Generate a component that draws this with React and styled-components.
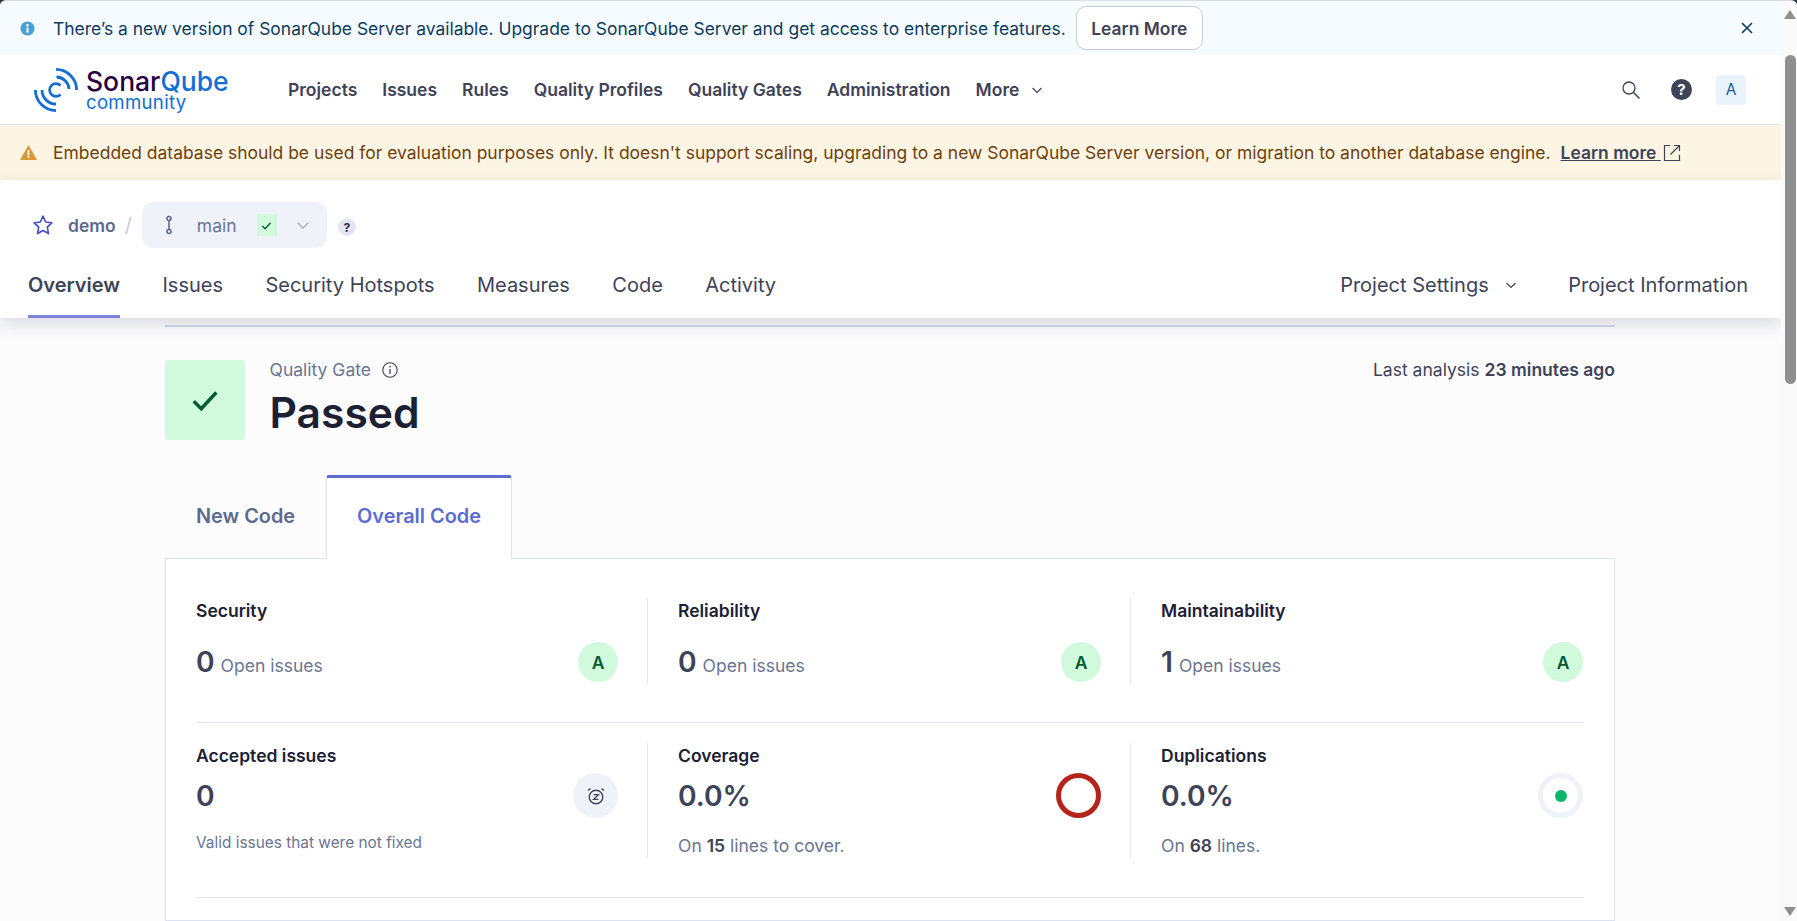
import React from 'react';
import styled, { createGlobalStyle } from 'styled-components';

const Global = createGlobalStyle`
  html, body { margin: 0; padding: 0; height: 921px; overflow: hidden; background: #30343c; }
  body, button { font-family: Inter, "Noto Sans", sans-serif; }
  * { box-sizing: border-box; }
  #root { height: 921px; }
`;

const Shell = styled.div`display: flex; height: 921px; border-top: 1px solid #d9dde8; border-radius: 6px 6px 0 0; overflow: hidden; background: #fcfcfd;`;
const Page = styled.div`flex: 1; min-width: 0; overflow: hidden; display: flex; flex-direction: column;`;

const Scrollbar = styled.div`
  width: 16px; flex: none; background: #fafafa; display: flex; flex-direction: column; align-items: center; padding: 9px 0 5px 2px;
`;
const ArrowUp = styled.div`width: 0; height: 0; flex: none; border-left: 6px solid transparent; border-right: 6px solid transparent; border-bottom: 9px solid #8f8f8f;`;
const ArrowDown = styled.div`width: 0; height: 0; flex: none; border-left: 6px solid transparent; border-right: 6px solid transparent; border-top: 9px solid #8f8f8f; margin-top: auto;`;
const Thumb = styled.div`width: 11px; height: 329px; flex: none; margin-top: 36px; background: #8f8f8f; border-radius: 6px;`;

const InfoBanner = styled.div`
  height: 54px; flex: none; background: #f5fbff; display: flex; align-items: center; padding: 0 28px 0 20px; color: #0e3b5c; font-size: 17.46px;
`;
const BannerText = styled.span`margin-left: 18px; white-space: nowrap;`;
const LearnButton = styled.button`
  margin-left: 10px; height: 44px; width: 127px; flex: none; background: #fff; border: 1px solid #c5cce0; border-radius: 10px;
  font-size: 17.46px; font-weight: 600; color: #3e4357; padding: 0;
`;
const CloseIcon = styled.span`margin-left: auto; display: flex; color: #0e3b5c;`;

const MainNav = styled.nav`
  height: 70px; flex: none; background: #fff; border-bottom: 1px solid #e1e6f3; display: flex; align-items: center; padding: 0 35px 0 34px;
`;
const Logo = styled.div`display: flex; align-items: center; gap: 8px; width: 254px; flex: none;`;
const LogoWords = styled.div`display: flex; flex-direction: column; font-family: Inter, sans-serif; margin-top: 3px;`;
const LogoTop = styled.span`font-size: 26.5px; line-height: 22px; font-weight: 500; color: #290042;`;
const LogoQube = styled.span`color: #126ed3;`;
const LogoBottom = styled.span`font-size: 18.6px; line-height: 20px; color: #126ed3; letter-spacing: 0.3px;`;
const NavLinks = styled.div`display: flex; align-items: center; gap: 25px;`;
const NavLink = styled.a`font-size: 17.5px; font-weight: 600; color: #3e4357; display: flex; align-items: center; gap: 12px;`;
const NavRight = styled.div`margin-left: auto; display: flex; align-items: center; color: #3e4357;`;
const HelpCircle = styled.span`
  width: 21px; height: 21px; border-radius: 50%; background: #3e4357; color: #fff; font-size: 15px; font-weight: 700;
  display: flex; align-items: center; justify-content: center; margin-left: 30px;
`;
const Avatar = styled.span`
  width: 30px; height: 30px; border-radius: 4px; background: #e8f3fb; color: #24598a; font-size: 15.4px;
  display: flex; align-items: center; justify-content: center; margin-left: 24px;
`;

const WarnBanner = styled.div`
  height: 55px; flex: none; background: #fcf5e4; color: #6e3f0b; font-size: 17.48px; display: flex; align-items: center; padding-left: 20px;
`;
const WarnText = styled.span`margin-left: 16px; white-space: nowrap;`;
const WarnLink = styled.a`color: #3e4357; font-weight: 600; text-decoration: underline; margin-left: 10px; display: flex; align-items: center; white-space: pre;`;
const ExtIcon = styled.span`display: flex; margin-left: 2px;`;

const ProjectHeader = styled.header`
  height: 138px; flex: none; background: #fff; box-shadow: 0 6px 16px rgba(30, 35, 60, 0.16); display: flex; flex-direction: column; position: relative; z-index: 1;
`;
const Crumbs = styled.div`display: flex; align-items: center; height: 46px; margin-top: 22px; padding-left: 32px;`;
const ProjectName = styled.span`font-size: 17.5px; font-weight: 600; color: #5d6a8c; margin-left: 14px;`;
const Slash = styled.span`font-size: 19.8px; color: #c5cce0; margin: 0 10px 0 9px;`;
const BranchPill = styled.div`
  width: 185px; height: 46px; border-radius: 12px; background: #eff2f9; display: flex; align-items: center; padding-left: 21px;
  font-size: 17.5px; color: #6a7590;
`;
const BranchName = styled.span`margin-left: 22px;`;
const BranchBadge = styled.span`width: 20px; height: 22px; background: #d1f9dc; display: flex; align-items: center; justify-content: center; margin-left: 20px; color: #055c30;`;
const BranchChevron = styled.span`display: flex; margin-left: 19px; color: #a8b0c8;`;
const QuestionDot = styled.span`
  width: 18px; height: 18px; border-radius: 50%; background: #e1e6f3; color: #2d3147; font-size: 12.1px; font-weight: 700;
  display: flex; align-items: center; justify-content: center; margin: 4px 0 0 11px;
`;
const TabRow = styled.div`display: flex; align-items: stretch; margin-top: auto; padding: 0 33px 0 28px; height: 70px; gap: 42.4px;`;
const NavTab = styled.a`
  font-size: 20px; font-weight: ${p => (p.$active ? 600 : 400)}; color: #3e4357; display: flex; align-items: center; gap: 16px;
  padding: 7px ${p => (p.$push ? 9 : 0)}px 0 0; border-bottom: 3px solid ${p => (p.$active ? '#7a83d9' : 'transparent')};
  margin-left: ${p => (p.$push ? 'auto' : '0')};
`;

const Content = styled.main`flex: 1; padding: 7px 166px 0 165px; width: 100%; display: flex; flex-direction: column; min-height: 0; margin: 0;`;
const Rule = styled.hr`border: 0; height: 2px; background: #d5d9e8; margin: 0; flex: none;`;
const GateRow = styled.section`display: flex; margin-top: 33px; height: 80px; flex: none;`;
const GateSquare = styled.div`width: 80px; height: 80px; border-radius: 4px; background: #d1f9dc; color: #055c30; display: flex; align-items: center; justify-content: center;`;
const GateText = styled.div`margin-left: 24.5px; display: flex; flex-direction: column;`;
const GateLabel = styled.div`font-size: 17.5px; line-height: 20px; color: #6a7590; display: flex; align-items: center; gap: 11px;`;
const GateInfo = styled.span`display: flex; color: #3e4357;`;
const GateValue = styled.div`font-size: 42.6px; font-weight: 600; line-height: 48px; color: #1c2033; margin-top: 9px;`;
const LastAnalysis = styled.div`margin-left: auto; font-size: 17.55px; line-height: 20px; color: #3e4357;`;
const Strong = styled.strong`font-weight: 600; color: #3e4357;`;

const CodeTabs = styled.div`display: flex; margin-top: 35px; height: 84px; flex: none; position: relative; z-index: 1; margin-bottom: -1px;`;
const CodeTab = styled.div`
  width: ${p => p.$w}px; font-size: 19.9px; font-weight: 600; display: flex; align-items: center; justify-content: center; padding-bottom: 2px;
  color: ${p => (p.$active ? '#5d6cd0' : '#5d6a8c')};
  background: ${p => (p.$active ? '#fff' : 'transparent')};
  ${p => p.$active && 'border: 1px solid #dde2f0; border-top: 3px solid #5d6cd0; border-bottom: 0; border-radius: 3px 3px 0 0; padding-bottom: 5px;'}
`;
const Card = styled.div`
  flex: 1; background: #fff; border: 1px solid #dde2f0; padding: 0 30px 0 30px;
`;
const MetricRow = styled.div`
  display: grid; grid-template-columns: 451px 483px 454px; border-bottom: 1px solid #e1e6f3; height: ${p => p.$h}px; padding-top: ${p => p.$top}px;
`;
const Metric = styled.div`
  height: ${p => p.$h}px; display: flex; flex-direction: column; position: relative;
  padding: 0 ${p => (p.$last ? 1 : 29)}px 0 ${p => (p.$first ? 0 : 30)}px;
  border-left: ${p => (p.$first ? '0' : '1px solid #e1e6f3')};
`;
const MetricTitle = styled.div`font-size: 17.5px; font-weight: 600; line-height: 20px; color: #1c2033; margin-top: ${p => p.$mt || 0}px;`;
const MetricLine = styled.div`display: flex; align-items: center; justify-content: space-between; margin-top: ${p => p.$mt}px;`;
const ValueGroup = styled.div`display: flex; align-items: baseline; gap: 6px;`;
const BigValue = styled.span`font-size: 28.2px; font-weight: 600; line-height: 40px; color: #3e4357;`;
const OpenIssues = styled.span`font-size: 17.5px; color: #6a7590;`;
const RatingCircle = styled.span`
  width: 40px; height: 40px; border-radius: 50%; background: #d1f9dc; color: #055c30; font-size: 17.5px; font-weight: 600;
  display: flex; align-items: center; justify-content: center;
`;
const ClockCircle = styled.span`
  width: 45px; height: 45px; border-radius: 50%; background: #eff2f9; color: #3e4357; display: flex; align-items: center; justify-content: center;
`;
const Ring = styled.span`
  width: 45px; height: 45px; border-radius: 50%; border: 5px solid ${p => p.$color}; display: flex; align-items: center; justify-content: center;
`;
const Dot = styled.span`width: 12px; height: 12px; border-radius: 50%; background: #0fb46a;`;
const SmallNote = styled.div`font-size: 15.4px; line-height: 18px; color: #6a7590; margin-top: ${p => p.$mt}px;`;
const Note = styled.div`font-size: 17.5px; line-height: 20px; color: #6a7590; margin-top: ${p => p.$mt}px;`;

const LogoMark = () => (
  <svg width="44" height="44" viewBox="0 0 44 44" fill="none" stroke="#126ed3" strokeWidth="2.8">
    <path d="M22 1.4 A20.6 20.6 0 0 1 42.6 22" />
    <path d="M22.5 9 A13 13 0 0 1 35 21" />
    <path d="M26.5 17.5 A6.4 6.4 0 1 0 26.5 26.5" strokeWidth="2.6" />
    <path d="M1.4 22 A20.6 20.6 0 0 0 22 42.6" />
    <path d="M8 22 A14 14 0 0 0 22 36" />
  </svg>
);

const SearchIcon = () => (
  <svg width="20" height="20" viewBox="0 0 20 20" fill="none" stroke="#3e4357" strokeWidth="1.3">
    <circle cx="8" cy="8" r="6" />
    <path d="M12.5 12.5 L18.5 18.5" strokeWidth="1.5" />
  </svg>
);
const Chevron = ({ size = 12 }) => (
  <svg width={size} height={size} viewBox="0 0 12 12" fill="none" stroke="currentColor" strokeWidth="1.2">
    <path d="M1.5 4 L6 8.5 L10.5 4" />
  </svg>
);
const Check = ({ size = 12, w = 2 }) => (
  <svg width={size} height={size} viewBox="0 0 24 24" fill="none" stroke="currentColor" strokeWidth={w * 2}>
    <path d="M3 13 L9 19 L21 6" />
  </svg>
);

export default function App() {
  return (
    <>
      <Global />
      <Shell>
        <Page>
          <InfoBanner>
            <svg width="15" height="15" viewBox="0 0 16 16"><circle cx="8" cy="8" r="7.5" fill="#4b9fd5" /><rect x="6.9" y="7" width="2.2" height="5.4" fill="#fff" /><circle cx="8" cy="4.6" r="1.3" fill="#fff" /></svg>
            <BannerText>There’s a new version of SonarQube Server available. Upgrade to SonarQube Server and get access to enterprise features.</BannerText>
            <LearnButton>Learn More</LearnButton>
            <CloseIcon>
              <svg width="12" height="12" viewBox="0 0 12 12" fill="none" stroke="currentColor" strokeWidth="1.6"><path d="M1 1 L11 11 M11 1 L1 11" /></svg>
            </CloseIcon>
          </InfoBanner>
          <MainNav>
            <Logo>
              <LogoMark />
              <LogoWords>
                <LogoTop>Sonar<LogoQube>Qube</LogoQube></LogoTop>
                <LogoBottom>community</LogoBottom>
              </LogoWords>
            </Logo>
            <NavLinks>
              <NavLink>Projects</NavLink>
              <NavLink>Issues</NavLink>
              <NavLink>Rules</NavLink>
              <NavLink>Quality Profiles</NavLink>
              <NavLink>Quality Gates</NavLink>
              <NavLink>Administration</NavLink>
              <NavLink>More <Chevron /></NavLink>
            </NavLinks>
            <NavRight>
              <SearchIcon />
              <HelpCircle>?</HelpCircle>
              <Avatar>A</Avatar>
            </NavRight>
          </MainNav>
          <WarnBanner>
            <svg width="17" height="15" viewBox="0 0 17 15"><path d="M8.5 0 L17 15 L0 15 Z" fill="#d99a35" /><rect x="7.7" y="5" width="1.6" height="5.5" fill="#fff" /><rect x="7.7" y="11.4" width="1.6" height="1.7" fill="#fff" /></svg>
            <WarnText>Embedded database should be used for evaluation purposes only. It doesn't support scaling, upgrading to a new SonarQube Server version, or migration to another database engine.</WarnText>
            <WarnLink>Learn more <ExtIcon>
              <svg width="18" height="18" viewBox="0 0 18 18" fill="none" stroke="#3e4357" strokeWidth="1.2"><path d="M7 1.5 H1.5 V16.5 H16.5 V11" /><path d="M11 1.5 H16.5 V7 M16.5 1.5 L7.5 10.5" /></svg>
            </ExtIcon></WarnLink>
          </WarnBanner>
          <ProjectHeader>
            <Crumbs>
              <svg width="22" height="22" viewBox="0 0 20 20" fill="none" stroke="#4350c4" strokeWidth="1.5" strokeLinejoin="round"><path d="M10 2 L12.4 7.3 L18 8 L13.9 12 L15 17.8 L10 15 L5 17.8 L6.1 12 L2 8 L7.6 7.3 Z" /></svg>
              <ProjectName>demo</ProjectName>
              <Slash>/</Slash>
              <BranchPill>
                <svg width="12" height="20" viewBox="0 0 12 20" fill="none" stroke="#5d6a8c" strokeWidth="1.6"><circle cx="6" cy="3.5" r="2" /><circle cx="6" cy="16.5" r="2" /><path d="M6 5.5 V14.5" /></svg>
                <BranchName>main</BranchName>
                <BranchBadge><Check size={11} w={1.5} /></BranchBadge>
                <BranchChevron><Chevron size={14} /></BranchChevron>
              </BranchPill>
              <QuestionDot>?</QuestionDot>
            </Crumbs>
            <TabRow>
              <NavTab $active>Overview</NavTab>
              <NavTab>Issues</NavTab>
              <NavTab>Security Hotspots</NavTab>
              <NavTab>Measures</NavTab>
              <NavTab>Code</NavTab>
              <NavTab>Activity</NavTab>
              <NavTab $push>Project Settings <Chevron /></NavTab>
              <NavTab>Project Information</NavTab>
            </TabRow>
          </ProjectHeader>
          <Content>
            <Rule />
            <GateRow>
              <GateSquare><Check size={30} w={1.4} /></GateSquare>
              <GateText>
                <GateLabel>Quality Gate
                  <GateInfo>
                    <svg width="16" height="16" viewBox="0 0 16 16" fill="none" stroke="currentColor" strokeWidth="1.1"><circle cx="8" cy="8" r="7.2" /><path d="M8 7 V12" strokeWidth="1.3" /><path d="M8 4 V5.4" strokeWidth="1.4" /></svg>
                  </GateInfo>
                </GateLabel>
                <GateValue>Passed</GateValue>
              </GateText>
              <LastAnalysis>Last analysis <Strong>23 minutes ago</Strong></LastAnalysis>
            </GateRow>
            <CodeTabs>
              <CodeTab $w={161}>New Code</CodeTab>
              <CodeTab $w={186} $active>Overall Code</CodeTab>
            </CodeTabs>
            <Card>
              <MetricRow $h={164} $top={39}>
                <Metric $first $h={86}>
                  <MetricTitle $mt={3}>Security</MetricTitle>
                  <MetricLine $mt={21}>
                    <ValueGroup><BigValue>0</BigValue><OpenIssues>Open issues</OpenIssues></ValueGroup>
                    <RatingCircle>A</RatingCircle>
                  </MetricLine>
                </Metric>
                <Metric $h={86}>
                  <MetricTitle $mt={3}>Reliability</MetricTitle>
                  <MetricLine $mt={21}>
                    <ValueGroup><BigValue>0</BigValue><OpenIssues>Open issues</OpenIssues></ValueGroup>
                    <RatingCircle>A</RatingCircle>
                  </MetricLine>
                </Metric>
                <Metric $last $h={86}>
                  <MetricTitle $mt={3}>Maintainability</MetricTitle>
                  <MetricLine $mt={21}>
                    <ValueGroup><BigValue>1</BigValue><OpenIssues>Open issues</OpenIssues></ValueGroup>
                    <RatingCircle>A</RatingCircle>
                  </MetricLine>
                </Metric>
              </MetricRow>
              <MetricRow $h={175} $top={20}>
                <Metric $first $h={115}>
                  <MetricTitle $mt={3}>Accepted issues</MetricTitle>
                  <MetricLine $mt={7}>
                    <BigValue>0</BigValue>
                    <ClockCircle>
                      <svg width="20" height="20" viewBox="0 0 20 20" fill="none" stroke="currentColor" strokeWidth="1.4"><circle cx="10" cy="11" r="6.8" /><path d="M2 4.5 L4.5 2.5 M18 4.5 L15.5 2.5" /><path d="M7.6 8.6 H12.4 L7.6 13.4 H12.4" strokeWidth="1.3" /></svg>
                    </ClockCircle>
                  </MetricLine>
                  <SmallNote $mt={16}>Valid issues that were not fixed</SmallNote>
                </Metric>
                <Metric $h={115}>
                  <MetricTitle $mt={3}>Coverage</MetricTitle>
                  <MetricLine $mt={7}>
                    <BigValue>0.0%</BigValue>
                    <Ring $color="#b3241b" />
                  </MetricLine>
                  <Note $mt={18}>On <Strong>15</Strong> lines to cover.</Note>
                </Metric>
                <Metric $last $h={115}>
                  <MetricTitle $mt={3}>Duplications</MetricTitle>
                  <MetricLine $mt={7}>
                    <BigValue>0.0%</BigValue>
                    <Ring $color="#eff2f9"><Dot /></Ring>
                  </MetricLine>
                  <Note $mt={18}>On <Strong>68</Strong> lines.</Note>
                </Metric>
              </MetricRow>
            </Card>
          </Content>
        </Page>
        <Scrollbar>
          <ArrowUp />
          <Thumb />
          <ArrowDown />
        </Scrollbar>
      </Shell>
    </>
  );
}
